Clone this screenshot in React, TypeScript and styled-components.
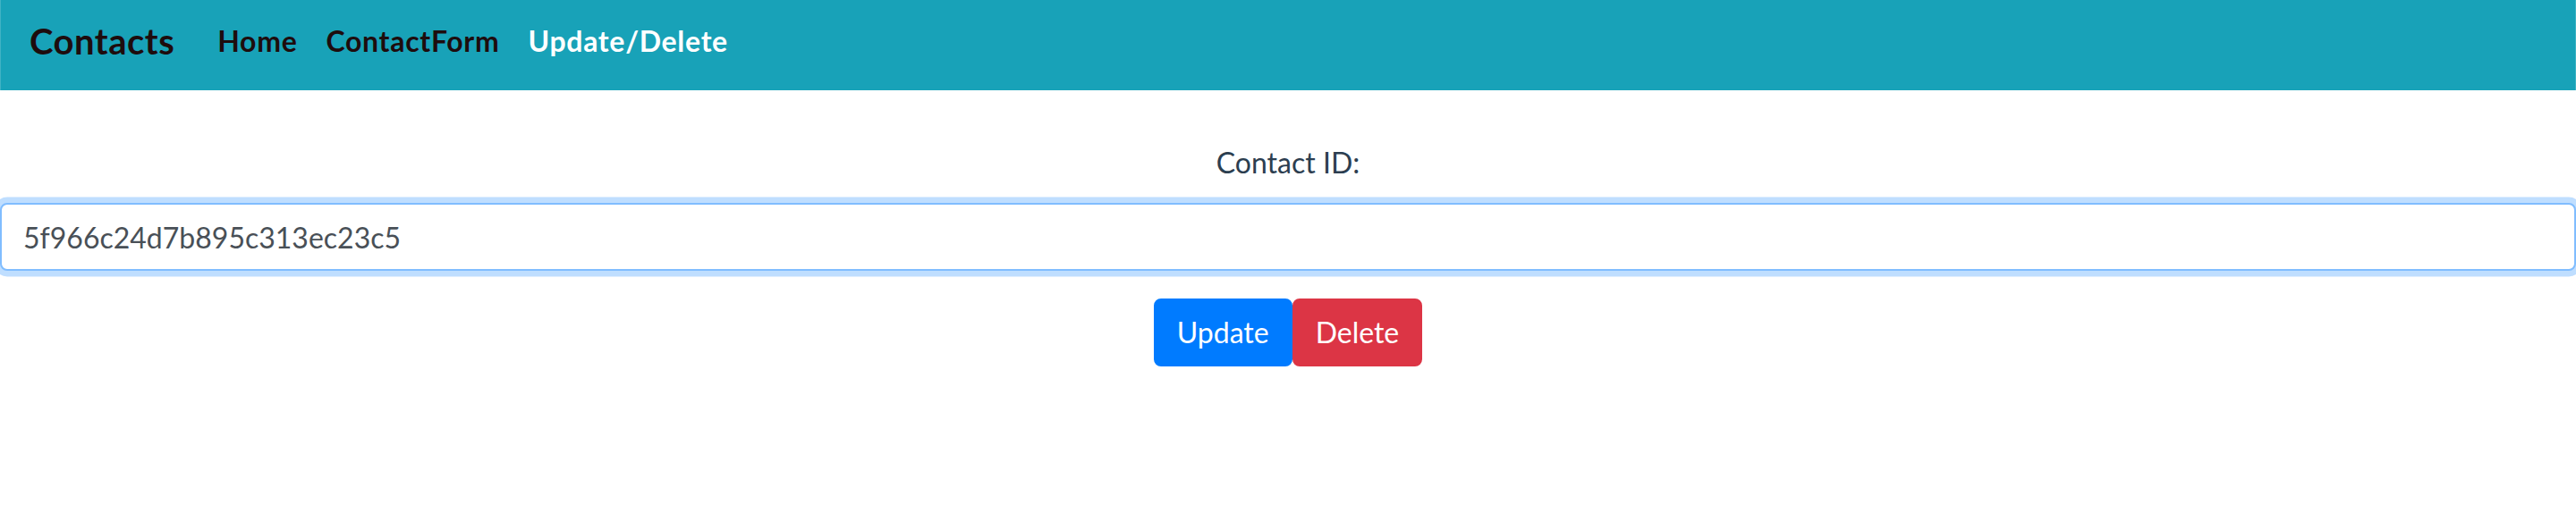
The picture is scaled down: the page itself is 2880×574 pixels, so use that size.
import React from "react";
import styled, { createGlobalStyle } from "styled-components";

const GlobalStyle = createGlobalStyle`
  html, body {
    margin: 0;
    padding: 0;
    background: #ffffff;
  }
  body {
    font-family: Lato, "Noto Sans", "Liberation Sans", sans-serif;
    -webkit-font-smoothing: antialiased;
  }
  * { box-sizing: border-box; }
`;

const Navbar = styled.nav`
  display: flex;
  align-items: center;
  height: 101px;
  padding: 0 32px 10px 32px;
  background: #18a2b8;
  border-left: 1px solid #3fb2c4;
  border-right: 1px solid #3fb2c4;
`;

const Brand = styled.a`
  font-size: 40px;
  font-weight: 700;
  letter-spacing: 0.5px;
  color: #1e0c0d;
  margin-right: 32px;
  text-decoration: none;
  line-height: 60px;
`;

const NavList = styled.div`
  display: flex;
  align-items: center;
`;

const NavLink = styled.a<{ $active?: boolean }>`
  font-size: 32px;
  font-weight: 700;
  letter-spacing: 0.7px;
  padding: 0 16px;
  line-height: 48px;
  color: ${(p) => (p.$active ? "#ffffff" : "#1e0c0d")};
  text-decoration: none;
`;

const Main = styled.main`
  display: flex;
  flex-direction: column;
  align-items: center;
  padding-top: 57px;
  color: #2c3e50;
  text-align: center;
`;

const Label = styled.label`
  display: block;
  font-size: 32px;
  line-height: 48px;
  margin-bottom: 21px;
`;

const Input = styled.input`
  display: block;
  width: 100%;
  height: 76px;
  padding: 12px 24px;
  font-family: inherit;
  font-size: 32px;
  line-height: 48px;
  color: #495057;
  background: #ffffff;
  border: 2px solid #80bdff;
  border-radius: 8px;
  outline: none;
  box-shadow: 0 0 0 6.4px rgba(0, 123, 255, 0.25);
`;

const ButtonRow = styled.div`
  display: flex;
  justify-content: center;
  margin-top: 31px;
`;

const Button = styled.button<{ $variant: "primary" | "danger" }>`
  font-family: inherit;
  font-size: 32px;
  line-height: 48px;
  padding: 12px 24px;
  border: 2px solid
    ${(p) => (p.$variant === "primary" ? "#007bff" : "#dc3545")};
  border-radius: 8px;
  color: #ffffff;
  background: ${(p) => (p.$variant === "primary" ? "#007bff" : "#dc3545")};
  cursor: pointer;
`;

export default function App() {
  return (
    <>
      <GlobalStyle />
      <Navbar>
        <Brand href="#">Contacts</Brand>
        <NavList>
          <NavLink href="#">Home</NavLink>
          <NavLink href="#">ContactForm</NavLink>
          <NavLink href="#" $active>
            Update/Delete
          </NavLink>
        </NavList>
      </Navbar>
      <Main>
        <Label htmlFor="contact-id">Contact ID:</Label>
        <Input id="contact-id" defaultValue="5f966c24d7b895c313ec23c5" />
        <ButtonRow>
          <Button $variant="primary">Update</Button>
          <Button $variant="danger">Delete</Button>
        </ButtonRow>
      </Main>
    </>
  );
}
